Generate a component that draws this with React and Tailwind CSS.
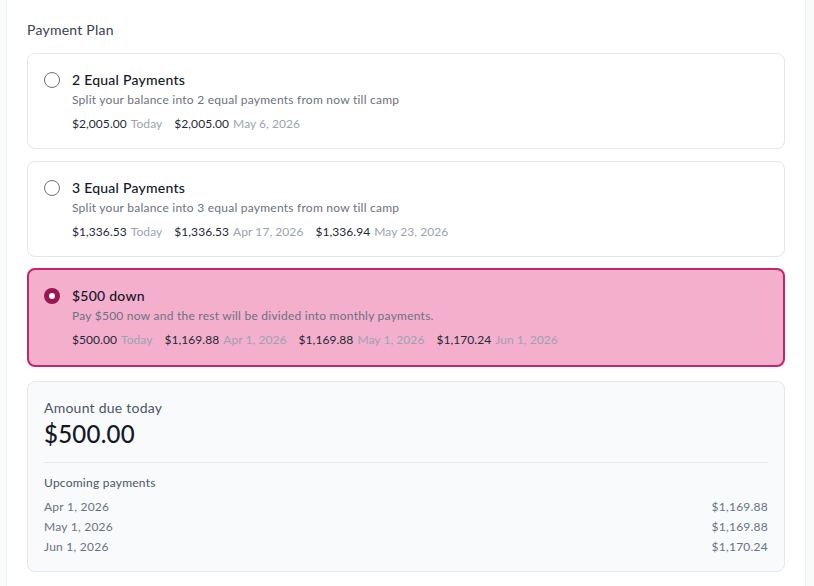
import React from "react";

const plans = [
  {
    title: "2 Equal Payments",
    desc: "Split your balance into 2 equal payments from now till camp",
    items: [
      ["$2,005.00", "Today"],
      ["$2,005.00", "May 6, 2026"],
    ],
  },
  {
    title: "3 Equal Payments",
    desc: "Split your balance into 3 equal payments from now till camp",
    items: [
      ["$1,336.53", "Today"],
      ["$1,336.53", "Apr 17, 2026"],
      ["$1,336.94", "May 23, 2026"],
    ],
  },
  {
    title: "$500 down",
    desc: "Pay $500 now and the rest will be divided into monthly payments.",
    selected: true,
    items: [
      ["$500.00", "Today"],
      ["$1,169.88", "Apr 1, 2026"],
      ["$1,169.88", "May 1, 2026"],
      ["$1,170.24", "Jun 1, 2026"],
    ],
  },
];

function PlanCard({ plan }) {
  const sel = plan.selected;
  return (
    <div
      className={
        sel
          ? "-mt-px flex gap-3 rounded-lg border-2 border-[#c6246a] bg-[#f4afcd] px-[15px] pt-4 pb-[17px]"
          : "flex gap-3 rounded-lg border border-[#e5e7eb] bg-white px-4 py-4"
      }
    >
      <div className="flex h-5 items-center">
        {sel ? (
          <div className="flex h-4 w-4 items-center justify-center rounded-full bg-[#9b1653]">
            <div className="h-[6px] w-[6px] rounded-full bg-white" />
          </div>
        ) : (
          <div className="h-4 w-4 rounded-full border-[1.5px] border-[#6b7280] bg-white" />
        )}
      </div>
      <div className="flex flex-col">
        <div className="text-sm leading-5 font-medium text-[#111827]">{plan.title}</div>
        <div className="mt-0.5 text-xs leading-4 text-[#6b7280]">{plan.desc}</div>
        <div className="mt-2 flex gap-3 text-xs leading-4 tracking-[0.005em]">
          {plan.items.map(([a, d], i) => (
            <div key={i} className="flex gap-1">
              <span className="text-[#1f2937]">{a}</span>
              <span className="text-[#9ca3af]">{d}</span>
            </div>
          ))}
        </div>
      </div>
    </div>
  );
}

export default function App() {
  const upcoming = [
    ["Apr 1, 2026", "$1,169.88"],
    ["May 1, 2026", "$1,169.88"],
    ["Jun 1, 2026", "$1,170.24"],
  ];
  return (
    <div
      className="min-h-[586px] w-full bg-[#f8fafc] pl-[6px] pr-[8px] tracking-[0.015em]"
      style={{ fontFamily: "Lato, 'Noto Sans', sans-serif" }}
    >
      <div className="min-h-[586px] border-x border-[#edf0f3] bg-white px-5 pt-5">
        <div className="text-sm leading-5 text-[#374151]">Payment Plan</div>
        <div className="mt-[13px] flex flex-col gap-3">
          {plans.map((p, i) => (
            <PlanCard key={i} plan={p} />
          ))}
        </div>
        <div className="mt-[14px] rounded-lg border border-[#e5e7eb] bg-[#f8fafc] px-4 pt-4 pb-3.5">
          <div className="text-sm leading-5 text-[#4b5563]">Amount due today</div>
          <div className="text-2xl leading-8 font-medium text-[#111827]">$500.00</div>
          <div className="mt-3 border-t border-[#e5e7eb] pt-3">
            <div className="text-xs leading-4 text-[#4b5563]">Upcoming payments</div>
            <div className="mt-1.5 flex flex-col">
              {upcoming.map(([d, a], i) => (
                <div key={i} className="flex justify-between text-xs leading-5 text-[#6b7280]">
                  <span>{d}</span>
                  <span>{a}</span>
                </div>
              ))}
            </div>
          </div>
        </div>
      </div>
    </div>
  );
}
